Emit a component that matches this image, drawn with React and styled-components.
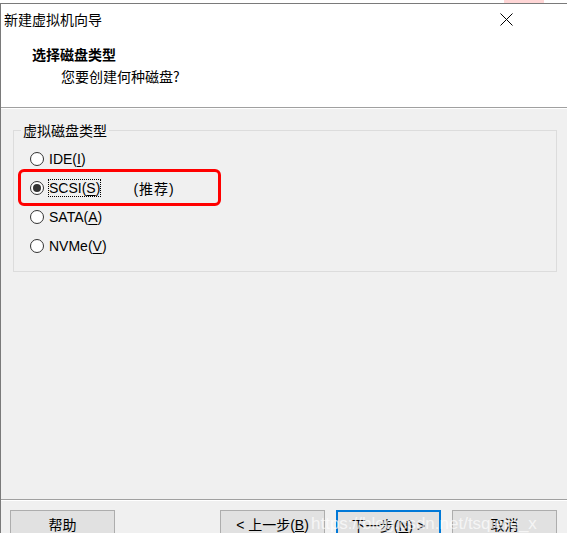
import React from 'react'
import styled, { createGlobalStyle } from 'styled-components'

const GlobalStyle = createGlobalStyle`
  html, body {
    margin: 0;
    padding: 0;
    background: #f0f0f0;
  }
  body {
    font-family: "Liberation Sans", "Noto Sans CJK SC", sans-serif;
    font-size: 14px;
    color: #000;
  }
`

const options = [
  { id: 'ide', label: 'IDE', key: 'I' },
  { id: 'scsi', label: 'SCSI', key: 'S', note: '(推荐)' },
  { id: 'sata', label: 'SATA', key: 'A' },
  { id: 'nvme', label: 'NVMe', key: 'V' },
]

const App = () => {
  const selected = 'scsi'

  return (
    <>
      <GlobalStyle />
      <Window>
        <TopEdge>
          <CloseHover />
        </TopEdge>
        <Frame>
          <Header>
            <TitleBar>
              <WindowTitle>新建虚拟机向导</WindowTitle>
              <CloseButton>
                <svg width="13" height="13" viewBox="0 0 13 13">
                  <path d="M0.5 0.5 L12.5 12.5 M12.5 0.5 L0.5 12.5" stroke="#000" strokeWidth="1" fill="none" />
                </svg>
              </CloseButton>
            </TitleBar>
            <PageTitle>选择磁盘类型</PageTitle>
            <PageSubtitle>您要创建何种磁盘?</PageSubtitle>
          </Header>

          <Content>
            <Group>
              <Legend>虚拟磁盘类型</Legend>
              <RadioList>
                {options.map((o) => (
                  <RadioRow key={o.id}>
                    <RadioCircle $checked={o.id === selected} />
                    <RadioLabel $focused={o.id === selected}>
                      {o.label}(<u>{o.key}</u>)
                    </RadioLabel>
                    {o.note && <Note>{o.note}</Note>}
                  </RadioRow>
                ))}
              </RadioList>
            </Group>
          </Content>

          <Footer>
            <Button>帮助</Button>
            <Spacer />
            <Button>&lt; 上一步(<u>B</u>)</Button>
            <Button $primary>下一步(<u>N</u>) &gt;</Button>
            <Button>取消</Button>
          </Footer>
        </Frame>

        <Highlight />
        <Watermark>https://blog.csdn.net/tsqiere_x</Watermark>
      </Window>
    </>
  )
}

const Window = styled.div`
  position: relative;
  width: 567px;
  height: 533px;
  overflow: hidden;
  display: flex;
  flex-direction: column;
  background: #f0f0f0;
`

const TopEdge = styled.div`
  height: 3px;
  flex-shrink: 0;
  background: #fff;
  display: flex;
  justify-content: flex-end;
  padding-right: 23px;
`

const CloseHover = styled.div`
  width: 40px;
  height: 3px;
  background: #ffd6d6;
`

const Frame = styled.div`
  flex: 1;
  min-height: 0;
  display: flex;
  flex-direction: column;
  border-top: 1px solid #7a7a7a;
  border-left: 1px solid #7a7a7a;
`

const Header = styled.div`
  height: 103px;
  flex-shrink: 0;
  background: #fff;
  border-bottom: 1px solid #a0a0a0;
  box-shadow: 0 1px 0 #fff;
  font-family: "Noto Sans CJK SC", sans-serif;
`

const TitleBar = styled.div`
  display: flex;
  align-items: center;
  justify-content: space-between;
  padding: 6px 54px 0 3px;
  height: 16px;
`

const WindowTitle = styled.div`
  font-size: 14px;
  line-height: 16px;
  margin-top: 1px;
`

const CloseButton = styled.div`
  display: flex;
  margin-top: 2px;
`

const PageTitle = styled.div`
  margin: 20px 0 0 31px;
  font-size: 14px;
  line-height: 16px;
  font-weight: bold;
`

const PageSubtitle = styled.div`
  margin: 6px 0 0 60px;
  font-size: 14px;
  line-height: 16px;
`

const Content = styled.div`
  flex: 1;
  min-height: 0;
  padding: 14px 10px 0 12px;
`

const Group = styled.fieldset`
  margin: 0;
  padding: 6px 7px 11px 7px;
  border: 1px solid #dcdcdc;
  min-width: 0;
`

const Legend = styled.legend`
  padding: 0 2px;
  font-family: "Noto Sans CJK SC", sans-serif;
  font-size: 14px;
  line-height: 16px;
`

const RadioList = styled.div`
  display: flex;
  flex-direction: column;
  margin-left: 9px;
`

const RadioRow = styled.div`
  display: flex;
  align-items: center;
  height: 29px;
`

const RadioCircle = styled.span`
  position: relative;
  box-sizing: border-box;
  width: 14px;
  height: 14px;
  border-radius: 50%;
  border: 1px solid #333;
  background: #fff;
  margin-right: 4px;
  flex-shrink: 0;

  &::after {
    content: '';
    display: ${(p) => (p.$checked ? 'block' : 'none')};
    position: absolute;
    left: 2px;
    top: 2px;
    width: 8px;
    height: 8px;
    border-radius: 50%;
    background: #333;
  }
`

const RadioLabel = styled.span`
  font-size: 14px;
  line-height: 16px;
  padding: 0;
  border: 1px ${(p) => (p.$focused ? 'dotted #000' : 'solid transparent')};
  u {
    text-underline-offset: 2px;
  }
`

const Note = styled.span`
  margin-left: 32px;
  font-family: "Liberation Sans", "Noto Sans CJK SC", sans-serif;
  font-size: 14px;
  letter-spacing: 1px;
`

const Footer = styled.div`
  height: 34px;
  flex-shrink: 0;
  box-sizing: border-box;
  display: flex;
  gap: 11px;
  padding: 10px 10px 0 9px;
  border-top: 1px solid #a0a0a0;
  box-shadow: inset 0 1px 0 #fff;
  overflow: hidden;
`

const Spacer = styled.div`
  flex: 1;
`

const Button = styled.button`
  box-sizing: border-box;
  width: 105px;
  height: 30px;
  flex-shrink: 0;
  margin: 0;
  padding: 0;
  background: #e1e1e1;
  border: ${(p) => (p.$primary ? '2px solid #0078d7' : '1px solid #adadad')};
  font-family: "Liberation Sans", "Noto Sans CJK SC", sans-serif;
  font-size: 14px;
  color: #000;
  line-height: 26px;
  display: flex;
  justify-content: center;
  align-items: flex-start;
  padding-top: 1px;
`

const Highlight = styled.div`
  position: absolute;
  left: 18px;
  top: 169px;
  width: 203px;
  height: 37px;
  box-sizing: border-box;
  border: 3px solid #ff0000;
  border-radius: 6px;
  pointer-events: none;
`

const Watermark = styled.div`
  position: absolute;
  left: 311px;
  top: 514px;
  font-family: "Liberation Sans", sans-serif;
  font-size: 17px;
  color: rgba(255, 255, 255, 0.7);
  white-space: nowrap;
  pointer-events: none;
`

export default App
